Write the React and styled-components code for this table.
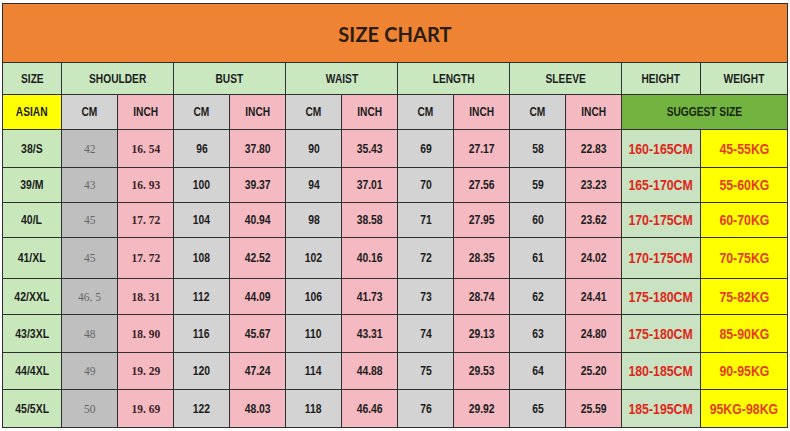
import React from 'react';
import styled, { createGlobalStyle } from 'styled-components';

const COLS = [58, 55, 55, 55, 55, 55, 55, 55, 55, 55, 55, 78, 86];
const ROWS = [58, 31, 34, 37, 34, 34, 40, 35, 37, 36, 37];

const COLORS = {
  line: '#2f2f2f',
  orange: '#ee8433',
  green: '#c9e8c0',
  sizeGreen: '#c8e8bb',
  heightGreen: '#c9e2c1',
  suggest: '#72b43f',
  gray: '#d3d3d3',
  darkGray: '#bfbfbf',
  pink: '#f4b9c1',
  yellow: '#ffff00',
};

const GlobalStyle = createGlobalStyle`
  html, body {
    margin: 0;
    padding: 0;
    background: #ffffff;
  }
  body {
    font-family: "Liberation Sans", Arial, sans-serif;
  }
`;

const Page = styled.div`
  width: 790px;
  height: 431px;
  padding: 3px 0 0 2px;
  box-sizing: border-box;
  background: #ffffff;
`;

const Chart = styled.div`
  display: grid;
  grid-template-columns: ${COLS.map(c => `${c}px`).join(' ')};
  grid-template-rows: ${ROWS.map(r => `${r}px`).join(' ')};
  gap: 1px;
  width: max-content;
  border: 1px solid ${COLORS.line};
  background: ${COLORS.line};
`;

const Cell = styled.div`
  grid-column: span ${props => props.$span || 1};
  background: ${props => COLORS[props.$bg] || COLORS.gray};
  display: flex;
  align-items: center;
  justify-content: center;
  overflow: hidden;
`;

const Title = styled(Cell)`
  font-family: Lato, "Open Sans", sans-serif;
  font-weight: 700;
  font-size: 20px;
  color: #2b1c0e;
  letter-spacing: 0.1px;
  padding-top: 2px;
`;

// the source image is squeezed sideways, so the labels are narrowed a bit
const Label = styled.span`
  display: inline-block;
  white-space: nowrap;
  font-weight: 700;
  font-size: ${props => props.$size || 12}px;
  color: ${props => props.$color || '#1c1c1c'};
  transform: scaleX(${props => props.$squeeze || 0.85});
`;

const SerifValue = styled.span`
  display: inline-block;
  white-space: nowrap;
  font-family: "Liberation Serif", "DejaVu Serif", serif;
  font-size: 13.5px;
  font-weight: ${props => (props.$dark ? 700 : 400)};
  color: ${props => (props.$dark ? '#3b2126' : '#666666')};
  transform: scaleX(0.85);
`;

const MEASURES = ['SHOULDER', 'BUST', 'WAIST', 'LENGTH', 'SLEEVE'];

const rows = [
  ['38/S', '42', '16. 54', 96, '37.80', 90, '35.43', 69, '27.17', 58, '22.83', '160-165CM', '45-55KG'],
  ['39/M', '43', '16. 93', 100, '39.37', 94, '37.01', 70, '27.56', 59, '23.23', '165-170CM', '55-60KG'],
  ['40/L', '45', '17. 72', 104, '40.94', 98, '38.58', 71, '27.95', 60, '23.62', '170-175CM', '60-70KG'],
  ['41/XL', '45', '17. 72', 108, '42.52', 102, '40.16', 72, '28.35', 61, '24.02', '170-175CM', '70-75KG'],
  ['42/XXL', '46. 5', '18. 31', 112, '44.09', 106, '41.73', 73, '28.74', 62, '24.41', '175-180CM', '75-82KG'],
  ['43/3XL', '48', '18. 90', 116, '45.67', 110, '43.31', 74, '29.13', 63, '24.80', '175-180CM', '85-90KG'],
  ['44/4XL', '49', '19. 29', 120, '47.24', 114, '44.88', 75, '29.53', 64, '25.20', '180-185CM', '90-95KG'],
  ['45/5XL', '50', '19. 69', 122, '48.03', 118, '46.46', 76, '29.92', 65, '25.59', '185-195CM', '95KG-98KG'],
];

const DataRow = ({ row }) => {
  const [size, sCm, sIn, ...rest] = row;
  const measures = rest.slice(0, 8);
  const [height, weight] = rest.slice(8);
  return (
    <>
      <Cell $bg="sizeGreen"><Label $size={12.5} $squeeze={0.84}>{size}</Label></Cell>
      <Cell $bg="darkGray"><SerifValue>{sCm}</SerifValue></Cell>
      <Cell $bg="pink"><SerifValue $dark>{sIn}</SerifValue></Cell>
      {measures.map((v, i) => (
        <Cell key={i} $bg={i % 2 ? 'pink' : 'gray'}>
          <Label $size={12.5} $squeeze={0.83}>{v}</Label>
        </Cell>
      ))}
      <Cell $bg="heightGreen">
        <Label $size={14} $squeeze={0.88} $color="#df261b">{height}</Label>
      </Cell>
      <Cell $bg="yellow">
        <Label $size={14} $squeeze={0.88} $color="#e43d18">{weight}</Label>
      </Cell>
    </>
  );
};

const App = () => (
  <Page>
    <GlobalStyle />
    <Chart>
      <Title $span={13} $bg="orange">SIZE CHART</Title>

      <Cell $bg="green"><Label>SIZE</Label></Cell>
      {MEASURES.map(m => (
        <Cell key={m} $span={2} $bg="green"><Label>{m}</Label></Cell>
      ))}
      <Cell $bg="green"><Label>HEIGHT</Label></Cell>
      <Cell $bg="green"><Label>WEIGHT</Label></Cell>

      <Cell $bg="yellow"><Label>ASIAN</Label></Cell>
      {MEASURES.map(m => (
        <React.Fragment key={m}>
          <Cell $bg="gray"><Label>CM</Label></Cell>
          <Cell $bg="pink"><Label>INCH</Label></Cell>
        </React.Fragment>
      ))}
      <Cell $span={2} $bg="suggest"><Label $color="#16240c">SUGGEST SIZE</Label></Cell>

      {rows.map(r => <DataRow key={r[0]} row={r} />)}
    </Chart>
  </Page>
);

export default App;
